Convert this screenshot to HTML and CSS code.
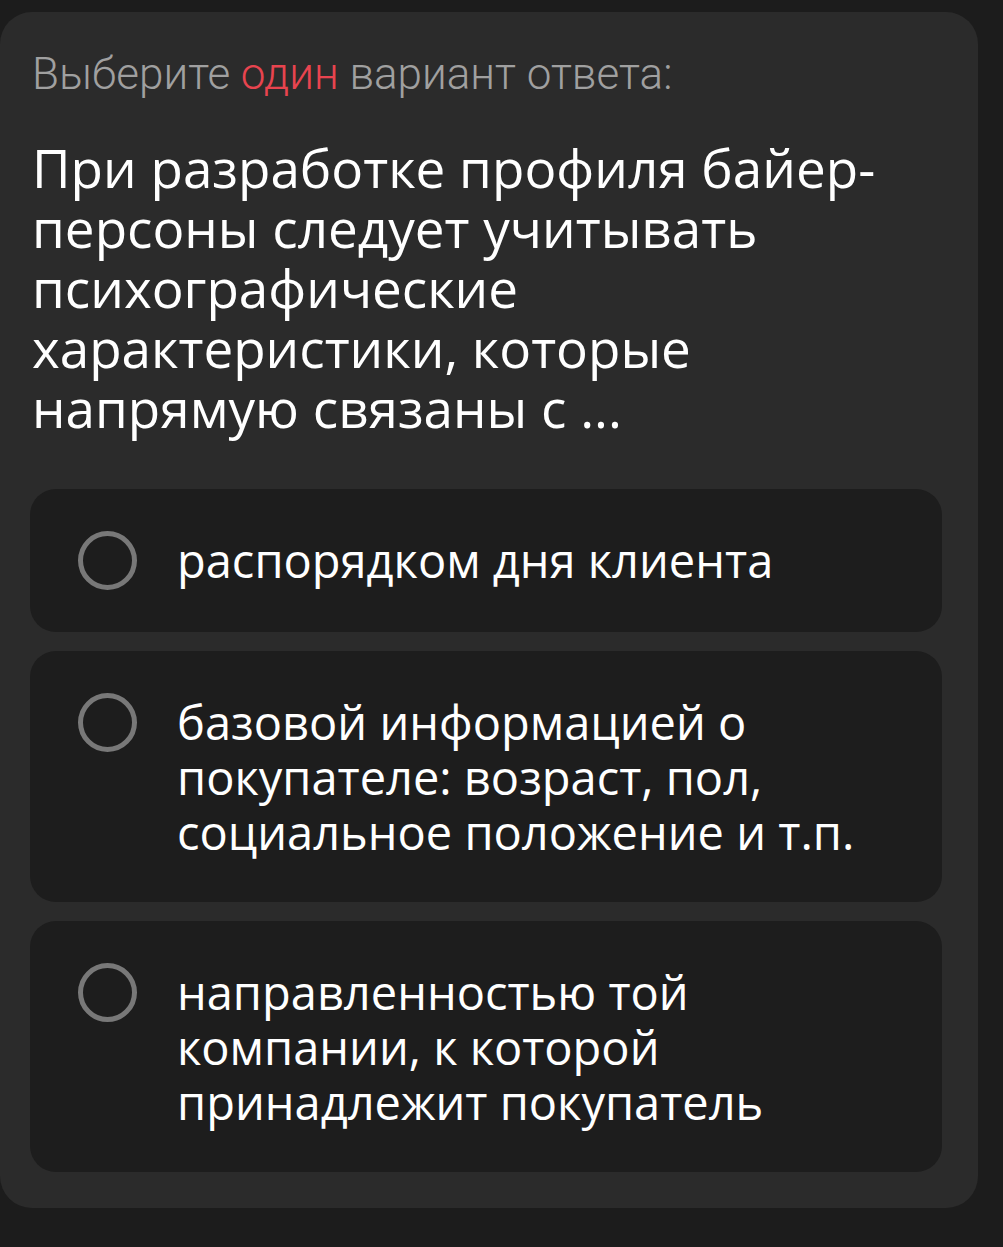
FILE: index.html
```html
<!DOCTYPE html>
<html lang="ru">
<head>
<meta charset="utf-8">
<link rel="stylesheet" href="styles.css">
</head>
<body>
<div class="card">
  <p class="hint">Выберите <span class="accent">один</span> вариант ответа:</p>
  <h1 class="question">При разработке профиля байер-персоны следует учитывать психографические характеристики, которые напрямую связаны с ...</h1>
  <div class="options">
    <div class="option"><span class="radio"></span><span class="label">распорядком дня клиента</span></div>
    <div class="option"><span class="radio"></span><span class="label">базовой информацией о покупателе: возраст, пол, социальное положение и т.п.</span></div>
    <div class="option"><span class="radio"></span><span class="label">направленностью той компании, к которой принадлежит покупатель</span></div>
  </div>
</div>
</body>
</html>
```
FILE: styles.css
```css
html, body {
  margin: 0;
  padding: 0;
  background: #1c1c1c;
}
body {
  padding-top: 12px;
  height: 1235px;
}
.card {
  width: 978px;
  box-sizing: border-box;
  background: #2b2b2b;
  border-radius: 32px;
  padding: 38px 36px 36px 32px;
}
.hint {
  margin: 0;
  font-family: Roboto, "Liberation Sans", sans-serif;
  font-weight: 300;
  font-size: 44px;
  line-height: 48px;
  color: #a0a0a0;
}
.accent {
  color: #e8444f;
}
.question {
  margin: 40px 0 0 0;
  font-family: "Open Sans", "Liberation Sans", sans-serif;
  font-weight: 500;
  font-size: 53px;
  line-height: 60px;
  color: #ffffff;
}
.options {
  margin-top: 51px;
  margin-left: -2px;
  display: flex;
  flex-direction: column;
  gap: 19px;
}
.option {
  background: #1d1d1d;
  border-radius: 26px;
  padding: 44px 32px 42px 48px;
  display: flex;
  align-items: flex-start;
  gap: 40px;
}
.radio {
  flex: 0 0 auto;
  width: 49px;
  height: 49px;
  margin-top: -2px;
  border: 5px solid #787878;
  border-radius: 50%;
}
.label {
  font-family: "Open Sans", "Liberation Sans", sans-serif;
  font-weight: 400;
  font-size: 47px;
  line-height: 55px;
  color: #ffffff;
}
```
